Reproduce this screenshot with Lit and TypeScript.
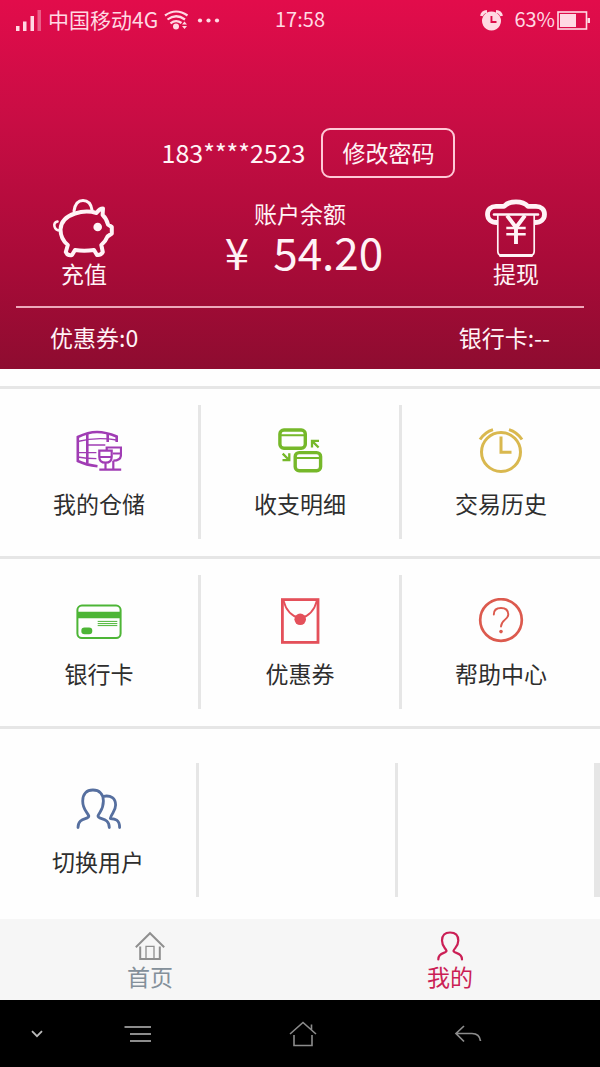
import { LitElement, html, css, svg, TemplateResult } from "lit";
import { customElement, property } from "lit/decorators.js";
import { classMap } from "lit/directives/class-map.js";

type Tile = { label: string; icon: TemplateResult; tone: string };

const barrel = svg`
  <g fill="none" stroke="currentColor" stroke-width="2.6">
    <path d="M40.7 14V8.500Q30 4 21 4T1.800 9V33Q10 37 21.5 38.2"/>
    <path d="M11.3 5.500v30M31.7 6v8"/>
    <path stroke-width="2.200" d="M23.3 22.700h12.400v6q0 6-6.200 6t-6.200-6zM29.500 34.700v6.600M23.300 29h12.400M30.700 22.500v-3h14.300v7q0 6.200-7.700 6.200M37.300 32.700v8.600M37 25.500h8M23.300 41.600h21.900"/>
    <path stroke-width="1.300" d="M1.600 13.500q19-5 39-1.500M11.300 17h18M1.600 24.700h18.800M1.600 29q9 1.500 18.800 1.700"/>
  </g>`;

const transfer = svg`
  <g fill="none" stroke="currentColor" stroke-width="3.400">
    <rect x="2.900" y="2" width="25.400" height="18.200" rx="4"/>
    <rect x="18.200" y="24.600" width="25.400" height="18.200" rx="4"/>
    <path stroke-width="2" d="M3 7.300h25M18 30h25"/>
    <path stroke-width="2.300" d="M42 12.900h-7v6.600M35 12.900l6.600 6.600M5.500 32.200h6.800v-7M12.300 32.200l-6.600-6.600"/>
  </g>`;

const alarm = svg`
  <g fill="none" stroke="currentColor" stroke-width="3">
    <circle cx="23" cy="24" r="19.500"/>
    <path d="M23 8.500v15.800h10.500"/>
    <path d="M2 11.500Q7 4 15 1.600M44 11.500Q39 4 31 1.600"/>
  </g>`;

const bankCard = svg`
  <rect x="1.400" y="7.600" width="43.200" height="32.400" rx="4.500" fill="none" stroke="currentColor" stroke-width="2"/>
  <path fill="currentColor" d="M1 13.700h44v6.500H1z"/>
  <rect x="5.300" y="29.600" width="11" height="6.600" rx="3.300" fill="currentColor"/>
  <path d="M21.700 23.400h19.600M21.700 25.600h19.600M21.700 27.600h19.600" stroke="currentColor" stroke-width="1"/>`;

const envelope = svg`
  <rect x="5.400" y="1.600" width="35.600" height="42.800" fill="none" stroke="currentColor" stroke-width="2.800"/>
  <path d="M6.500 2.500Q10 17 23.200 20.500Q36.400 17 39.900 2.500" fill="none" stroke="currentColor" stroke-width="1.800"/>
  <circle cx="23.200" cy="21.300" r="5.800" fill="currentColor"/>`;

const help = svg`
  <g fill="none" stroke="currentColor">
    <circle cx="23" cy="22" r="20.800" stroke-width="2.700"/>
    <path stroke-width="1.900" stroke-linecap="round" d="M15.800 16.500Q15.800 10 23 10T30.300 16.500C30.300 21.500 23 22 23 28.500"/>
  </g>
  <circle cx="23" cy="33.600" r="1.800" fill="currentColor"/>`;

const users = svg`
  <g fill="none" stroke="currentColor" stroke-width="2.800" stroke-linecap="round" stroke-linejoin="round">
    <path d="M3 41.500C3 31 14 34 13.800 30C12.500 26 7.700 24 7.700 15C7.700 8 11.500 4 17.900 4S28.400 8 28.400 15C28.400 24 24.300 26 23 30C23 34 34.300 31 34.300 41.500"/>
    <path d="M28.700 10.300C36 9 40.600 12.500 40.600 19C40.600 25.500 36.500 27 35.300 32.500C40 33 44.600 33.500 44.600 41.500"/>
  </g>`;

const piggy = svg`
  <g fill="none" stroke="currentColor" stroke-width="4" stroke-linejoin="round" stroke-linecap="round">
    <path stroke-width="3" d="M22 13Q23.500 2.500 31 2.500T40 12"/>
    <path d="M23 15.500Q34 12 44.500 15Q47.500 10.500 51 10.500L50.600 17Q54.500 20.500 56 26.500L59.800 29V35.500L55.500 38.500Q53.500 43.500 49.300 47L50.800 54Q49 57.500 45 57L42 52Q32 53.500 23 52L20 57Q15.500 58 13.800 54L15.800 47Q8.500 41 8.500 31.500Q9 20 23 15.500Z"/>
    <path stroke-width="2.600" d="M5.500 23.600Q1.500 24.500 2.500 28.500T8 32.500"/>
  </g>
  <circle cx="45.700" cy="29" r="4.300" fill="currentColor"/>`;

const withdraw = svg`
  <g fill="none" stroke="currentColor" stroke-linejoin="round">
    <path stroke-width="4.800" d="M13 24.500C7 24.500 3.500 21 3.500 16.300S7 8.300 12 8.300H20C23 5 26.500 3.800 32 3.800S41 5 44 8.300H52C57 8.300 60.500 11.500 60.500 16.300S57 24.500 51 24.500"/>
    <path stroke-width="2.600" stroke-linecap="round" d="M10 16.500H54"/>
    <path stroke-width="1.700" d="M13.800 17V53Q13.800 57.500 18 57.500H46Q50.200 57.500 50.200 53V17"/>
    <path stroke-width="3" stroke-linecap="round" d="M16.500 57.400H47.500"/>
    <path stroke-width="3.900" d="M23 17.500L32 29.500L41 17.500M32 29V46"/>
    <path stroke-width="2.600" d="M22.300 30H41.700M22.300 36.300H41.700"/>
  </g>`;

@customElement("status-bar")
export class StatusBar extends LitElement {
  static styles = css`
    :host { display: grid; grid-template-columns: 1fr auto 1fr; align-items: center; height: 40px; padding: 0 10px; font-size: 20px; line-height: 38px; color: #ffd9e3; }
    .side { display: flex; align-items: center; }
    .left { gap: 6px; padding-left: 5px; }
    .carrier { font-size: 21px; }
    .right { justify-content: flex-end; gap: 2px; }
    .alarm { margin-right: 9px; }
    svg { display: block; fill: currentColor; }
    span { padding-bottom: 2px; }
  `;
  render() {
    return html`
      <div class="side left">
        <svg width="27" height="22" viewBox="0 0 27 22"><path d="M1 17h3.500v5H1zM8 12.500h3.500V22H8zM15.500 7H19v15h-3.500z"/><path opacity=".4" d="M22.500 1H26v21h-3.500z"/></svg>
        <span class="carrier">中国移动4G</span>
        <svg width="25" height="20" viewBox="0 0 25 20"><g fill="none" stroke="currentColor" stroke-width="2.200"><path d="M1 5.500Q12 -2.500 23.500 5.500M3.500 9.500Q12 3 21 9.500M6.500 13.300Q12 9 17.500 13"/></g><circle cx="12" cy="16.500" r="3"/><path d="M18 14.500l2.500-3 2.500 3zM18 16l2.500 3 2.500-3z"/></svg>
        <svg width="26" height="20" viewBox="0 0 26 20"><circle cx="5" cy="10.500" r="2.100"/><circle cx="13.500" cy="10.500" r="2.100"/><circle cx="22" cy="10.500" r="2.100"/></svg>
      </div>
      <span>17:58</span>
      <div class="side right">
        <svg class="alarm" width="23" height="21" viewBox="0 0 23 21"><path fill-rule="evenodd" d="M11.500 1.500a9.500 9.500 0 1 0 .01 0zM10.500 6h1.900v5h4.100v1.900h-6z"/><path fill="none" stroke="currentColor" stroke-width="3" d="M1.500 6Q2.500 1.800 7 1.500M21.500 6Q20.500 1.800 16 1.500"/></svg>
        <span>63%</span>
        <svg width="33" height="20" viewBox="0 0 33 20"><rect x="1" y="2" width="28.500" height="17" fill="none" stroke="currentColor" stroke-width="1.600"/><path d="M3 4h16v13H3zM30.500 8h2.500v5h-2.500z"/></svg>
      </div>`;
  }
}

@customElement("account-panel")
export class AccountPanel extends LitElement {
  static styles = css`
    :host { display: block; color: #fff3f6; }
    button { font: inherit; color: inherit; background: none; border: 0; padding: 0; cursor: pointer; }
    .user { display: flex; justify-content: center; align-items: center; gap: 16px; margin-top: 88px; padding-left: 17px; font-size: 25px; }
    .phone { padding-bottom: 3px; }
    .change { box-sizing: border-box; height: 50px; padding: 0 19px 2px; border: 2px solid #ffc9d7; border-radius: 9px; font-size: 23px; }
    .account { display: grid; grid-template-columns: 168px 1fr 168px; margin-top: 20px; height: 92px; font-size: 23px; }
    .action { display: flex; flex-direction: column; align-items: center; justify-content: flex-start; line-height: 30px; }
    .action svg { display: block; }
    .balance { display: flex; flex-direction: column; align-items: center; line-height: 30px; }
    .amount { display: flex; gap: 24px; padding-left: 8px; font-size: 44px; line-height: 46px; }
    .totals { display: flex; justify-content: space-between; margin: 16px 16px 0; padding: 0 34px; border-top: 2px solid #eda9bb; font-size: 23px; line-height: 58px; height: 61px; }
  `;
  render() {
    return html`
      <div class="user"><span class="phone">183****2523</span><button class="change">修改密码</button></div>
      <div class="account">
        <button class="action"><svg width="64" height="60" viewBox="0 0 64 60">${piggy}</svg>充值</button>
        <div class="balance"><span>账户余额</span><div class="amount"><span>¥</span><span>54.20</span></div></div>
        <button class="action"><svg width="64" height="60" viewBox="0 0 64 60">${withdraw}</svg>提现</button>
      </div>
      <div class="totals"><span>优惠券:0</span><span>银行卡:--</span></div>`;
  }
}

@customElement("tile-row")
export class TileRow extends LitElement {
  @property({ attribute: false }) tiles: Tile[] = [];
  @property({ type: Boolean }) last = false;
  static styles = css`
    :host { display: block; border-top: 3px solid #e6e6e6; }
    .row { display: grid; grid-template-columns: 201fr 201fr 198fr; padding: 16px 0 17px; }
    .row.last { grid-template-columns: 199fr 199fr 202fr; padding: 34px 0 22px; }
    .cell { box-sizing: border-box; height: 134px; border-right: 3px solid #e6e6e6; }
    .cell:last-child { border-right: 0; }
    .last .cell:last-child { border-right: 6px solid #e6e6e6; }
    .tile { display: flex; flex-direction: column; align-items: center; gap: 14px; height: 100%; box-sizing: border-box; padding-top: 23px; font-size: 23px; line-height: 30px; color: #2e2e2e; text-decoration: none; }
    .purple { color: #a03cb4; }
    .lime { color: #76b82a; }
    .gold { color: #d9b84f; }
    .green { color: #4db536; }
    .red { color: #e4505a; }
    .coral { color: #dc5a4e; }
    .blue { color: #566f9f; }
  `;
  render() {
    return html`<div class=${classMap({ row: true, last: this.last })}>
      ${[0, 1, 2].map((i) => {
        const t = this.tiles[i];
        return html`<div class="cell">${t
          ? html`<a class="tile" href="#"><svg class=${t.tone} width="46" height="46" viewBox="0 0 46 46">${t.icon}</svg><span>${t.label}</span></a>`
          : ""}</div>`;
      })}
    </div>`;
  }
}

@customElement("app-root")
export class AppRoot extends LitElement {
  static styles = css`
    :host { display: flex; flex-direction: column; min-height: 100vh; background: #fefefe; font-family: "Noto Sans CJK SC", sans-serif; color: #333; }
    .top { background: linear-gradient(#e20c4b 0%, #c80d44 33%, #a80b38 72%, #8e0c30 100%); }
    main { flex: 1; padding-top: 17px; }
    .tabs { display: grid; grid-template-columns: 1fr 1fr; height: 81px; background: #f6f6f6; }
    .tab { display: flex; flex-direction: column; align-items: center; padding-top: 12px; font-size: 23px; line-height: 30px; color: #84909a; text-decoration: none; }
    .tab.active { color: #cb1f55; }
    .tab svg { display: block; }
    .home-icon { color: #8f8f8f; }
    .keys { display: grid; grid-template-columns: 55px 1fr 1fr 1fr; height: 67px; padding-right: 50px; background: #000; }
    .keys button { display: flex; align-items: center; justify-content: center; border: 0; padding: 0; background: none; color: #8c8c8c; cursor: pointer; }
    .keys .hide { padding-left: 18px; }
  `;

  private rows: Tile[][] = [
    [
      { label: "我的仓储", icon: barrel, tone: "purple" },
      { label: "收支明细", icon: transfer, tone: "lime" },
      { label: "交易历史", icon: alarm, tone: "gold" },
    ],
    [
      { label: "银行卡", icon: bankCard, tone: "green" },
      { label: "优惠券", icon: envelope, tone: "red" },
      { label: "帮助中心", icon: help, tone: "coral" },
    ],
    [{ label: "切换用户", icon: users, tone: "blue" }],
  ];

  render() {
    return html`
      <header class="top"><status-bar></status-bar><account-panel></account-panel></header>
      <main>${this.rows.map((r, i) => html`<tile-row .tiles=${r} ?last=${i === this.rows.length - 1}></tile-row>`)}</main>
      <nav class="tabs">
        <a class="tab" href="#"><svg class="home-icon" width="30" height="30" viewBox="0 0 30 30" fill="none" stroke="currentColor" stroke-width="2"><path d="M.8 16.300L15 2.200L29.200 16.300M5.200 15.500V28H24.800V15.500"/><path stroke-width="1.300" d="M11 28V15.300H19V28"/></svg>首页</a>
        <a class="tab active" href="#"><svg width="30" height="30" viewBox="0 0 30 30" fill="none" stroke="currentColor" stroke-width="2.200" stroke-linecap="round"><path d="M3.300 28.500C3.300 20.500 11.500 23 11.500 19.800C10.500 17 7 15.500 7 9.500C7 4 10 1.500 15 1.500S23.300 4 23.300 9.500C23.300 15.500 19.500 17 18.500 19.800C18.500 23 27 20.500 27 28.500"/></svg>我的</a>
      </nav>
      <footer class="keys">
        <button class="hide" aria-label="隐藏"><svg width="12" height="8" viewBox="0 0 12 8" fill="none" stroke="#bbb" stroke-width="1.800"><path d="M1 1.200l5 5 5-5"/></svg></button>
        <button aria-label="菜单"><svg width="28" height="18" viewBox="0 0 28 18" stroke="currentColor" stroke-width="1.800"><path d="M.5 2H27M6 9H27M6 16H27"/></svg></button>
        <button aria-label="主页"><svg width="28" height="26" viewBox="0 0 28 26" fill="none" stroke="currentColor" stroke-width="1.600"><path d="M1 13L14 1.500L27 13M22.500 8.500V3.500M11 24.500H5V14M11 24.500H23V14"/></svg></button>
        <button aria-label="返回"><svg width="28" height="18" viewBox="0 0 28 18" fill="none" stroke="currentColor" stroke-width="1.700"><path d="M10 1L2 8.500L10 16.500M2 8.500H18Q25.500 8.500 26.500 16"/></svg></button>
      </footer>`;
  }
}
